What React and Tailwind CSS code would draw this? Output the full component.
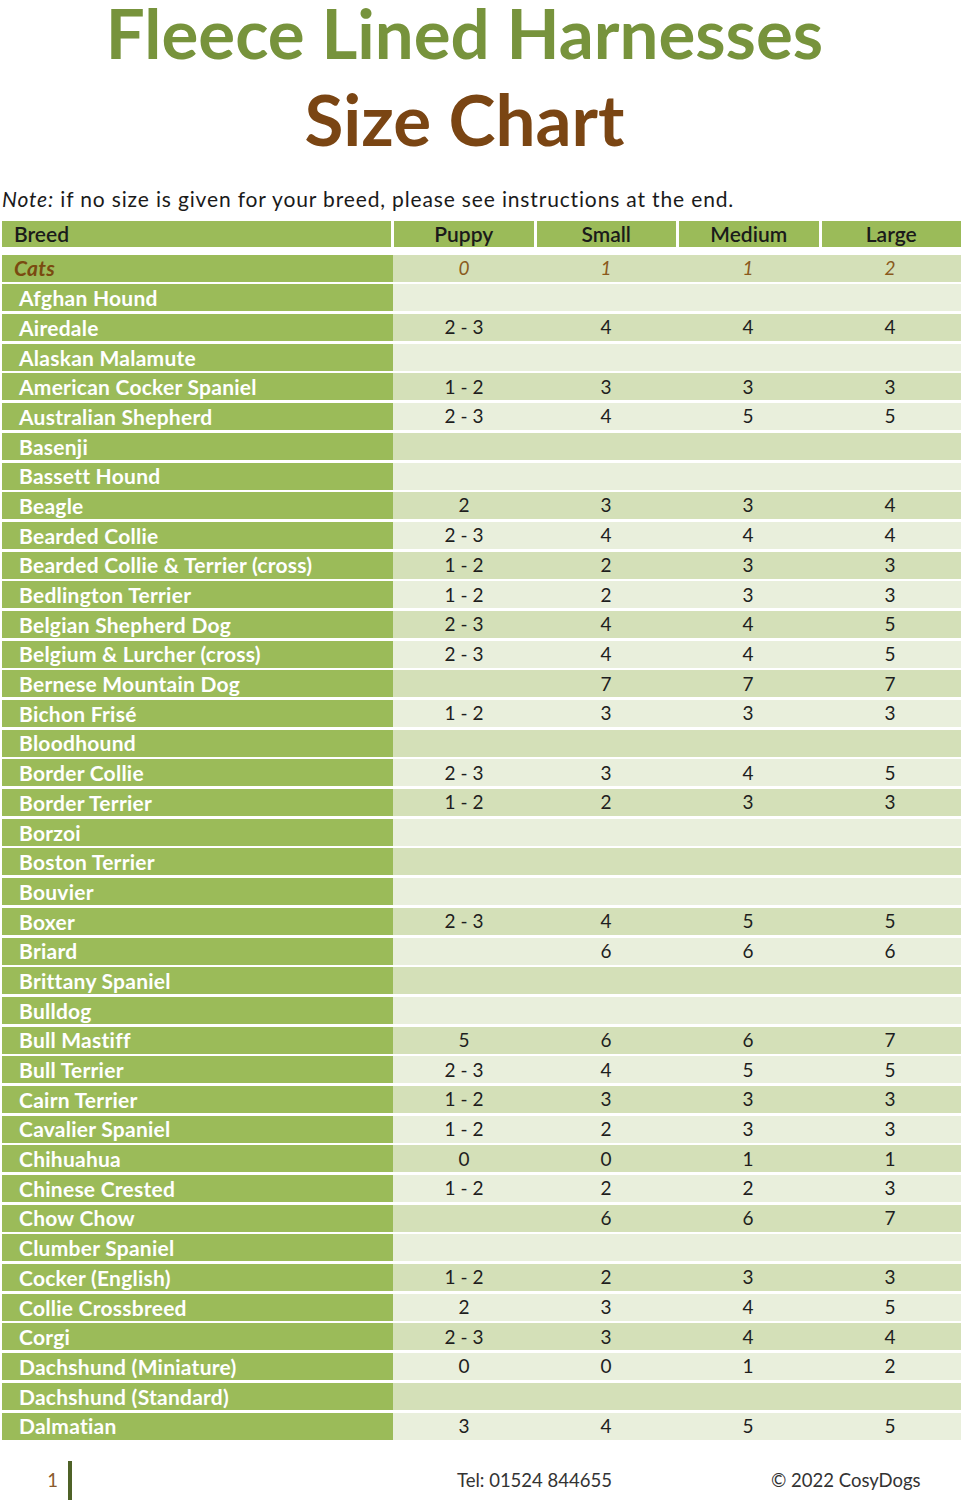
import React from 'react'

// Size chart rows: [breed, puppy, small, medium, large]
const rows = [
  ['Afghan Hound', '', '', '', ''],
  ['Airedale', '2 - 3', '4', '4', '4'],
  ['Alaskan Malamute', '', '', '', ''],
  ['American Cocker Spaniel', '1 - 2', '3', '3', '3'],
  ['Australian Shepherd', '2 - 3', '4', '5', '5'],
  ['Basenji', '', '', '', ''],
  ['Bassett Hound', '', '', '', ''],
  ['Beagle', '2', '3', '3', '4'],
  ['Bearded Collie', '2 - 3', '4', '4', '4'],
  ['Bearded Collie & Terrier (cross)', '1 - 2', '2', '3', '3'],
  ['Bedlington Terrier', '1 - 2', '2', '3', '3'],
  ['Belgian Shepherd Dog', '2 - 3', '4', '4', '5'],
  ['Belgium & Lurcher (cross)', '2 - 3', '4', '4', '5'],
  ['Bernese Mountain Dog', '', '7', '7', '7'],
  ['Bichon Frisé', '1 - 2', '3', '3', '3'],
  ['Bloodhound', '', '', '', ''],
  ['Border Collie', '2 - 3', '3', '4', '5'],
  ['Border Terrier', '1 - 2', '2', '3', '3'],
  ['Borzoi', '', '', '', ''],
  ['Boston Terrier', '', '', '', ''],
  ['Bouvier', '', '', '', ''],
  ['Boxer', '2 - 3', '4', '5', '5'],
  ['Briard', '', '6', '6', '6'],
  ['Brittany Spaniel', '', '', '', ''],
  ['Bulldog', '', '', '', ''],
  ['Bull Mastiff', '5', '6', '6', '7'],
  ['Bull Terrier', '2 - 3', '4', '5', '5'],
  ['Cairn Terrier', '1 - 2', '3', '3', '3'],
  ['Cavalier Spaniel', '1 - 2', '2', '3', '3'],
  ['Chihuahua', '0', '0', '1', '1'],
  ['Chinese Crested', '1 - 2', '2', '2', '3'],
  ['Chow Chow', '', '6', '6', '7'],
  ['Clumber Spaniel', '', '', '', ''],
  ['Cocker (English)', '1 - 2', '2', '3', '3'],
  ['Collie Crossbreed', '2', '3', '4', '5'],
  ['Corgi', '2 - 3', '3', '4', '4'],
  ['Dachshund (Miniature)', '0', '0', '1', '2'],
  ['Dachshund (Standard)', '', '', '', ''],
  ['Dalmatian', '3', '4', '5', '5'],
]

const sizes = ['Puppy', 'Small', 'Medium', 'Large']

function Row({ breed, values, dark, cat }) {
  return (
    <div className="flex h-[27px] mt-[2.7px]">
      <div
        className={
          cat
            ? 'w-[391px] bg-[#9bbb59] pl-[12px] flex items-center text-[21px] tracking-[0.25px] font-bold italic text-[#7a4a10]'
            : 'w-[391px] bg-[#9bbb59] pl-[17px] flex items-center text-[21px] tracking-[0.25px] font-bold text-white'
        }
      >
        {breed}
      </div>
      <div className={dark ? 'flex flex-1 bg-[#d4e0b8]' : 'flex flex-1 bg-[#e9efdc]'}>
        {values.map((v, i) => (
          <div
            key={i}
            className={
              cat
                ? 'flex-1 flex items-center justify-center text-[19px] italic text-[#8a5a1c]'
                : 'flex-1 flex items-center justify-center text-[19px] text-[#1e1e1e]'
            }
          >
            {v}
          </div>
        ))}
      </div>
    </div>
  )
}

export default function App() {
  return (
    <div className="w-[963px] h-[1500px] bg-white font-['Lato',sans-serif] overflow-hidden">
      {/* Title */}
      <div className="flex flex-col items-center pr-[34px]">
        <h1 className="text-[69px] leading-[66px] font-bold text-[#77933c]">Fleece Lined Harnesses</h1>
        <h2 className="text-[71px] leading-[66px] mt-[20px] font-bold text-[#7a4513]">Size Chart</h2>
      </div>

      <p className="ml-[2px] mt-[35px] text-[21px] leading-[24px] tracking-[0.85px] text-[#1a1a1a]">
        <span className="italic">Note:</span> if no size is given for your breed, please see instructions at the end.
      </p>

      <div className="mx-[2px] mt-[10px]">
        {/* Header */}
        <div className="flex h-[26px] gap-[3px]">
          <div className="w-[389px] bg-[#9bbb59] pl-[12px] flex items-center text-[21px] font-semibold text-[#1a1a1a]">
            Breed
          </div>
          {sizes.map((s) => (
            <div
              key={s}
              className="flex-1 bg-[#9bbb59] flex items-center justify-center text-[21px] font-semibold text-[#1a1a1a]"
            >
              {s}
            </div>
          ))}
        </div>
        <div className="h-[5px]" />
        <Row breed="Cats" values={['0', '1', '1', '2']} dark cat />
        {rows.map((r, i) => (
          <Row key={r[0]} breed={r[0]} values={r.slice(1)} dark={i % 2 === 1} />
        ))}
      </div>

      {/* Footer */}
      <div className="mt-[21px] h-[40px] flex items-center text-[18.5px] text-[#333]">
        <div className="w-[68px] flex justify-end pr-[10px] text-[#8a5a2b]">1</div>
        <div className="w-[4px] h-[40px] bg-[#4f6228]" />
        <div className="w-[385px]" />
        <div className="w-[160px]">Tel: 01524 844655</div>
        <div className="w-[154px]" />
        <div>© 2022 CosyDogs</div>
      </div>
    </div>
  )
}
